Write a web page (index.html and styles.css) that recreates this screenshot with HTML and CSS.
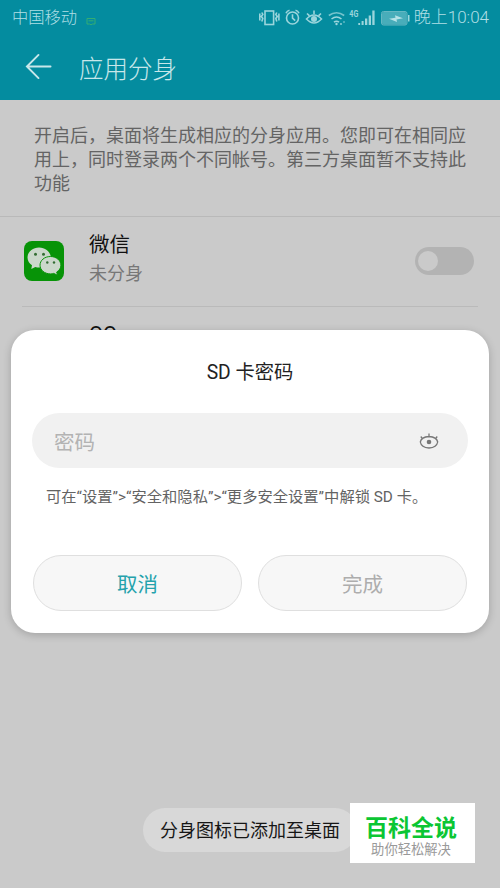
FILE: index.html
```html
<!DOCTYPE html>
<html lang="zh-CN">
<head>
<meta charset="utf-8">
<title>应用分身</title>
<link rel="stylesheet" href="styles.css">
</head>
<body>
<div class="screen">
  <header class="header">
    <div class="status">
      <span class="carrier">中国移动</span>
      <svg class="sms" viewBox="0 0 10 9"><path d="M1 1.500h8v5.500H6.500L5 7.800 3.500 7H1zM2.500 3.800h5"/></svg>
      <svg class="status-icons" viewBox="0 0 155 24">
        <g class="line">
          <rect x="10" y="6" width="8.600" height="13.500"/>
          <path d="M6.800 7.500l1 2-1.500 2 1.500 2-1 3M4.800 8.500v7M21.800 7.500l-1 2 1.500 2-1.500 2 1 3M23.900 8.500v7"/>
          <circle cx="37.500" cy="13" r="6"/>
          <path d="M37.500 9.200v4l2.700 2.500M31 8.300q1-2.500 3.500-3M44 8.300q-1-2.500-3.500-3"/>
          <path d="M51.500 14q7.500-8 15 0q-7.500 8-15 0zM52 8.500l2.300 2.200M59 5.500v3.500M66 8.500l-2.300 2.200"/>
          <path d="M73.800 10.500q7.700-5.500 15.400 0" opacity=".75"/>
          <path d="M76.500 14q5-4 10 0M79 17.200q2.500-2 5 0"/>
        </g>
        <g class="fill">
          <circle cx="59" cy="14" r="3"/><circle cx="81.500" cy="19" r="1.200"/><circle cx="86" cy="19" r=".9"/><circle cx="89" cy="17" r=".8"/>
          <text x="94.300" y="12" textLength="9" lengthAdjust="spacingAndGlyphs">4G</text>
          <path d="M103.300 18h1.800v2h-1.800zM106.600 16h2v4h-2zM110 13.500h2.300v6.500h-2.300zM113.700 10.500h2.300v9.500h-2.300zM117.300 5.500h2.300v14.500h-2.300z"/>
          <rect x="127" y="7" width="24.500" height="12.500" rx="1.500" opacity=".45"/>
          <rect x="153" y="10" width="1.500" height="6.500"/>
          <path class="bolt" d="M134 13.700l6.500-1-.5-2.500 8 3-6.500 1.200.5 2.500z"/>
        </g>
        <rect class="case" x="126.500" y="6.500" width="25.500" height="13.500" rx="2"/>
      </svg>
      <span class="time">晚上10:04</span>
    </div>
    <div class="titlebar">
      <svg class="back" viewBox="0 0 28 28"><path d="M26.500 14H2M14 2L2 14l12 12"/></svg>
      <h1>应用分身</h1>
    </div>
  </header>

  <p class="description">开启后，桌面将生成相应的分身应用。您即可在相同应用上，同时登录两个不同帐号。第三方桌面暂不支持此功能</p>

  <div class="list">
    <div class="row">
      <svg class="app-icon" viewBox="0 0 40 40">
        <rect width="40" height="40" rx="8" fill="#079307"/>
        <path fill="#cbd8cb" d="M15 6.500C8.500 6.500 3.500 11 3.500 16.500c0 3.200 1.800 6 4.500 7.800L7.300 28l4-2.100q1.900.6 3.700.6c6.500 0 11.800-4.500 11.800-10S21.500 6.500 15 6.500z"/>
        <path fill="#cbd8cb" stroke="#079307" stroke-width="1" d="M26.500 15.500c-6 0-10.500 3.900-10.500 8.700s4.500 8.700 10.500 8.700q1.700 0 3.200-.5l3.900 1.900-.9-3.300c2.600-1.600 4.200-4 4.200-6.800 0-4.800-4.700-8.700-10.400-8.700z"/>
        <g fill="#346d34"><circle cx="11.500" cy="13.300" r="1.500"/><circle cx="19.500" cy="13.300" r="1.500"/><circle cx="23.300" cy="21.500" r="1.200"/><circle cx="30" cy="21.500" r="1.200"/></g>
      </svg>
      <div class="app-text">
        <div class="app-name">微信</div>
        <div class="app-state">未分身</div>
      </div>
      <div class="switch"><div class="knob"></div></div>
    </div>
    <div class="row next">
      <div class="app-name">QQ</div>
    </div>
  </div>

  <section class="dialog">
    <h2>SD 卡密码</h2>
    <div class="field">
      <span>密码</span>
      <svg class="eye" viewBox="0 0 20 18"><path d="M1.300 10q1-5 8.700-5.500 7.700.5 8.700 5.500-1 5.500-8.700 6-7.700-.5-8.700-6zM10 4.500V1.500M3.500 6.800L1.800 4.500M16.500 6.800l1.700-2.300"/><circle cx="10" cy="10" r="2.300"/></svg>
    </div>
    <p class="hint">可在“设置”&gt;“安全和隐私”&gt;“更多安全设置”中解锁 SD 卡。</p>
    <div class="actions">
      <div class="button">取消</div>
      <div class="button disabled">完成</div>
    </div>
  </section>

  <div class="toast">分身图标已添加至桌面</div>
  <div class="brand">
    <strong>百科全说</strong>
    <span>助你轻松解决</span>
  </div>
</div>
</body>
</html>
```
FILE: styles.css
```css
* { box-sizing: border-box; }

body {
  margin: 0;
  font-family: Roboto, "Noto Sans CJK SC", sans-serif;
}

h1, h2, p { margin: 0; font-weight: 400; }

.screen {
  position: relative;
  width: 500px;
  height: 888px;
  overflow: hidden;
  background: #cacaca;
}

.header {
  height: 100px;
  background: #048c9f;
  color: #b0dfe5;
}

.status {
  display: flex;
  align-items: center;
  height: 35px;
  padding: 0 11px 0 12px;
}

.carrier { font-size: 16.3px; font-weight: 300; line-height: 35px; }

.sms {
  width: 10px;
  height: 9px;
  margin: 7px 0 0 9px;
  fill: none;
  stroke: #34ad73;
}

.status-icons {
  width: 155px;
  height: 24px;
  margin: 0 4px 2px auto;
  flex: none;
}

.line { fill: none; stroke: #9bd5dc; stroke-width: 1.6; }
.fill { fill: #9bd5dc; }
.fill text { font: 700 9px Roboto, sans-serif; }
.fill .bolt { fill: #b5e2e7; }
.case { fill: none; stroke: #65b7c2; }
.time { font-size: 17px; font-weight: 300; line-height: 35px; white-space: nowrap; }

.titlebar {
  display: flex;
  align-items: center;
  height: 65px;
  padding-left: 25px;
}

.back {
  width: 27px;
  height: 27px;
  margin: 0 27px 2px 0;
  fill: none;
  stroke: #c8e7ea;
  stroke-width: 2;
  stroke-linecap: round;
}

.titlebar h1 { padding-top: 3px; font-size: 24.5px; font-weight: 300; color: #c8e7ea; line-height: 65px; }

.description {
  height: 117px;
  padding: 24px 30px 0 34px;
  border-bottom: 1px solid #b9b9b9;
  font-size: 18px;
  line-height: 24px;
  color: #646464;
}

.list { padding: 0 22px; }

.row {
  display: flex;
  align-items: center;
  height: 90px;
  padding: 0 4px 1px 2px;
  border-bottom: 1px solid #bababa;
}

.app-icon { width: 40px; height: 40px; margin-right: 25px; }
.app-text { flex: 1; padding-bottom: 4px; }
.app-name { font-size: 20.5px; line-height: 30px; color: #101010; }
.app-state { font-size: 18px; line-height: 28px; color: #777; }

.switch {
  width: 59px;
  height: 28px;
  padding: 4px 3px;
  border-radius: 14px;
  background: #b3b3b3;
}

.knob { width: 20px; height: 20px; border-radius: 50%; background: #cacaca; }

.next { align-items: flex-start; padding: 7px 0 0 67px; }
.next .app-name { line-height: 40px; }

.dialog {
  position: absolute;
  left: 11px;
  top: 330px;
  width: 478px;
  height: 303px;
  padding: 23px 21px 0 21px;
  border-radius: 24px;
  background: #fff;
  box-shadow: 0 2px 8px rgba(0, 0, 0, 0.2);
}

.dialog h2 { font-size: 19.3px; line-height: 40px; text-align: center; color: #222; }

.field {
  display: flex;
  align-items: center;
  justify-content: space-between;
  height: 55px;
  margin-top: 20px;
  padding: 0 29px 0 22px;
  border-radius: 28px;
  background: #f1f1f1;
  font-size: 20.5px;
  color: #b3b3b3;
}

.field span { padding-top: 1px; }

.eye { width: 20px; height: 18px; fill: none; stroke: #777; stroke-width: 1.3; }
.eye circle { fill: #777; stroke: none; }

.hint {
  margin: 17px 0 0 14px;
  font-size: 15.3px;
  line-height: 24px;
  color: #636363;
  white-space: nowrap;
}

.actions { display: flex; gap: 16px; margin: 46px 1px 0 1px; }

.button {
  flex: 1;
  height: 56px;
  border: 1px solid #dfdfdf;
  border-radius: 28px;
  background: #f7f7f7;
  color: #24a2ac;
  font-size: 20.5px;
  line-height: 58px;
  text-align: center;
}

.disabled { color: #adadad; }

.toast {
  position: absolute;
  left: 143px;
  top: 808px;
  width: 214px;
  height: 44px;
  border-radius: 22px;
  background: #d8d8d8;
  color: #161616;
  font-size: 18px;
  line-height: 46px;
  text-align: center;
}

.brand {
  position: absolute;
  left: 350px;
  top: 803px;
  display: flex;
  flex-direction: column;
  align-items: center;
  width: 125px;
  height: 60px;
  padding: 10px 3px 0 0;
  background: #fff;
}

.brand strong { font-size: 23px; line-height: 31px; color: #0bc633; }
.brand span { font-size: 13.3px; line-height: 12px; color: #999; }
```
